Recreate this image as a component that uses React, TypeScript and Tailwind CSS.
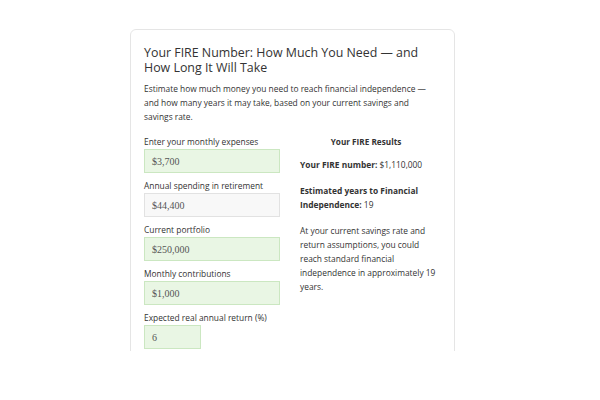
import React from "react"

const fields = [
  { label: "Enter your monthly expenses", value: "$3,700", tone: "green", width: "w-full" },
  { label: "Annual spending in retirement", value: "$44,400", tone: "gray", width: "w-full" },
  { label: "Current portfolio", value: "$250,000", tone: "green", width: "w-full" },
  { label: "Monthly contributions", value: "$1,000", tone: "green", width: "w-full" },
  { label: "Expected real annual return (%)", value: "6", tone: "green", width: "w-[57px]" },
]

export default function App() {
  return (
    <div
      className="w-[600px] h-[400px] bg-white text-[#333]"
      style={{ fontFamily: '"Open Sans", "Liberation Sans", sans-serif' }}
    >
      <div className="pl-[130px] pt-[29px]">
        <div className="h-[322px] w-[325px] overflow-hidden">
          <div className="rounded-[6px] border border-[#e5e5e5] px-[13px] pt-[14.5px] pb-6">
            <h2 className="text-[12.4px] leading-[15.5px] font-normal text-[#333]">
              Your FIRE Number: How Much You Need — and How Long It Will Take
            </h2>
            <p className="mt-[6px] text-[8.4px] leading-[14px]">
              Estimate how much money you need to reach financial independence — and how many years it may
              take, based on your current savings and
              <br />
              savings rate.
            </p>

            <div className="mt-[11px] grid grid-cols-[136px_142px] gap-x-[20px]">
              <div className="flex flex-col gap-[5.5px]">
                {fields.map((f) => (
                  <div key={f.label} className="flex flex-col">
                    <label className="text-[8.4px] leading-[13px]">{f.label}</label>
                    <div
                      className={`${f.width} mt-[1.5px] h-[24px] border px-[7px] flex items-center text-[10px] text-[#555] ${
                        f.tone === "green" ? "bg-[#e9f6e4] border-[#cbe7c1]" : "bg-[#f8f8f8] border-[#e2e2e2]"
                      }`}
                      style={{ fontFamily: '"Liberation Serif", serif' }}
                    >
                      {f.value}
                    </div>
                  </div>
                ))}
              </div>

              <div className="flex flex-col text-[8.4px] leading-[14px]">
                <h3 className="pr-[10px] text-center font-bold text-[8.2px] leading-[13px]">Your FIRE Results</h3>
                <p className="mt-[10px]">
                  <span className="font-bold">Your FIRE number:</span> $1,110,000
                </p>
                <p className="mt-[12px]">
                  <span className="font-bold">Estimated years to Financial Independence:</span> 19
                </p>
                <p className="mt-[12px]">
                  At your current savings rate and return assumptions, you could reach standard financial
                  independence in approximately 19 years.
                </p>
              </div>
            </div>
          </div>
        </div>
      </div>
    </div>
  )
}
